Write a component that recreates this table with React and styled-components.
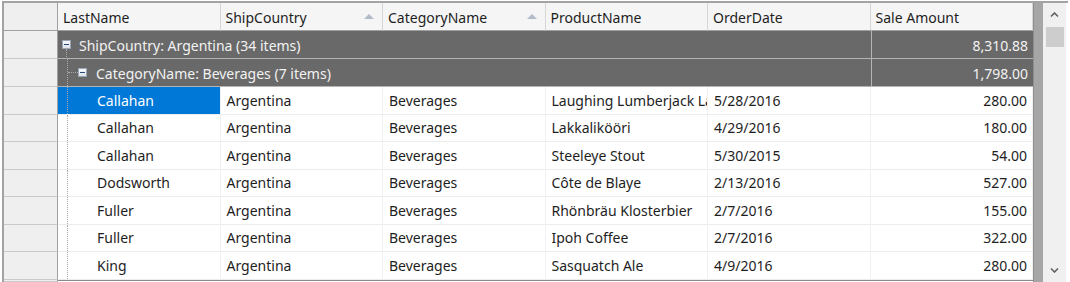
import React from "react";
import styled, { createGlobalStyle } from "styled-components";

const Global = createGlobalStyle`
  body {
    margin: 0;
    background: #ffffff;
    font-family: "Noto Sans", "Open Sans", Arial, sans-serif;
    font-size: 14px;
    color: #1e1e1e;
  }
`;

const COLS = "54px repeat(6, 1fr)";

const Frame = styled.div`
  display: flex;
  width: 1064px;
  height: 279px;
  margin: 1px 0 0 2px;
  border-top: 2px solid #a3a3a3;
  border-left: 2px solid #a3a3a3;
  overflow: hidden;
`;

const Table = styled.div`
  display: flex;
  flex-direction: column;
  width: 1029px;
  flex: none;
`;

const Row = styled.div`
  display: grid;
  grid-template-columns: ${COLS};
  height: ${(p) => p.$h || "27.5px"};
  flex: none;
`;

const Foot = styled.div`
  display: grid;
  grid-template-columns: 54px 1fr;
  flex: 1;
`;

const Corner = styled.div`
  background: #efefef;
  border-right: 1px solid #a0a0a0;
  border-bottom: 1px solid #a0a0a0;
`;

const HeaderCell = styled.div`
  display: flex;
  align-items: center;
  justify-content: space-between;
  padding: 2px 6px 0 5px;
  background: #f5f5f5;
  border-right: 1px solid #d6d6d6;
  border-bottom: 1px solid #a0a0a0;
  white-space: nowrap;
  overflow: hidden;
`;

const SortArrow = styled.span`
  width: 0;
  height: 0;
  margin: 0 2px 2px 0;
  border-left: 5px solid transparent;
  border-right: 5px solid transparent;
  border-bottom: 5px solid #b2bcc8;
`;

const RowHead = styled.div`
  background: #efefef;
  border-right: 1px solid #a0a0a0;
  border-bottom: 1px solid #c9c9c9;
`;

const FootEdge = styled.div`
  background: #ffffff;
  border-top: 1px solid #8a8a8a;
`;

const GroupCaption = styled.div`
  grid-column: span 5;
  display: flex;
  align-items: stretch;
  background: #696969;
  color: #f2f2f2;
  border-bottom: 1px solid #b4b4b4;
  white-space: nowrap;
`;

const GroupSum = styled.div`
  display: flex;
  align-items: center;
  justify-content: flex-end;
  padding: 1px 5px 0 0;
  background: #696969;
  color: #f2f2f2;
  border-left: 1px solid #b4b4b4;
  border-bottom: 1px solid #b4b4b4;
`;

const Guide = styled.span`
  flex: none;
  width: 9px;
  border-right: 1px dotted #a8a8a8;
`;

const Stub = styled.span`
  flex: none;
  align-self: center;
  width: 10px;
  border-top: 1px dotted #a8a8a8;
`;

const Expander = styled.span`
  position: relative;
  flex: none;
  align-self: center;
  width: 9px;
  height: 9px;
  margin-left: ${(p) => p.$ml || "0px"};
  box-sizing: border-box;
  border: 1px solid #9aa6b6;
  background: linear-gradient(#f6f8fb, #dde3eb);

  &::before {
    content: "";
    position: absolute;
    left: 1px;
    top: 3px;
    width: 5px;
    height: 1px;
    border-top: 1px solid #2c4a78;
  }

  ${(p) =>
    p.$tail &&
    `&::after {
      content: "";
      position: absolute;
      left: 3px;
      top: 8px;
      height: 10px;
      border-left: 1px dotted #a8a8a8;
    }`}
`;

const Label = styled.span`
  align-self: center;
  padding-top: ${(p) => (p.$group ? "1px" : "0")};
  margin-left: ${(p) => p.$ml || "8px"};
`;

const Cell = styled.div`
  display: flex;
  align-items: center;
  justify-content: ${(p) => (p.$right ? "flex-end" : "flex-start")};
  padding: ${(p) => (p.$right ? "0 5px 0 0" : "0 0 0 6px")};
  background: ${(p) => (p.$selected ? "#0078d7" : "#ffffff")};
  color: ${(p) => (p.$selected ? "#ffffff" : "#1e1e1e")};
  border-right: 1px solid #f0f0f0;
  border-bottom: 1px solid #ececec;
  white-space: nowrap;
  overflow: hidden;
  text-overflow: clip;
`;

const TreeCell = styled(Cell)`
  padding: 0;
  align-items: stretch;
`;

const Splitter = styled.div`
  flex: none;
  width: 10px;
  background: #a6a6a6;
  border-left: 1px solid #8e8e8e;
  box-sizing: border-box;
`;

const ScrollBar = styled.div`
  flex: none;
  display: flex;
  flex-direction: column;
  align-items: center;
  width: 23px;
  background: #f0f0f0;
`;

const ScrollBtn = styled.div`
  display: flex;
  align-items: center;
  justify-content: center;
  width: 100%;
  height: 24px;
  flex: none;
`;

const Track = styled.div`
  flex: 1;
  width: 100%;
  display: flex;
  flex-direction: column;
  align-items: center;
`;

const Thumb = styled.div`
  width: 18px;
  height: 20px;
  background: #cdcdcd;
`;

const columns = [
  { name: "LastName" },
  { name: "ShipCountry", sorted: true },
  { name: "CategoryName", sorted: true },
  { name: "ProductName" },
  { name: "OrderDate" },
  { name: "Sale Amount" },
];

const rows = [
  ["Callahan", "Argentina", "Beverages", "Laughing Lumberjack Lager", "5/28/2016", "280.00"],
  ["Callahan", "Argentina", "Beverages", "Lakkalikööri", "4/29/2016", "180.00"],
  ["Callahan", "Argentina", "Beverages", "Steeleye Stout", "5/30/2015", "54.00"],
  ["Dodsworth", "Argentina", "Beverages", "Côte de Blaye", "2/13/2016", "527.00"],
  ["Fuller", "Argentina", "Beverages", "Rhönbräu Klosterbier", "2/7/2016", "155.00"],
  ["Fuller", "Argentina", "Beverages", "Ipoh Coffee", "2/7/2016", "322.00"],
  ["King", "Argentina", "Beverages", "Sasquatch Ale", "4/9/2016", "280.00"],
];

const Chevron = ({ down }) => (
  <svg width="9" height="6" viewBox="0 0 9 6">
    <path
      d={down ? "M1 1.5 L4.5 5 L8 1.5" : "M1 4.5 L4.5 1 L8 4.5"}
      fill="none"
      stroke="#606060"
      strokeWidth="1.6"
    />
  </svg>
);

export default function App() {
  return (
    <>
      <Global />
      <Frame>
        <Table>
          <Row $h="28px">
            <Corner />
            {columns.map((c) => (
              <HeaderCell key={c.name}>
                <span>{c.name}</span>
                {c.sorted && <SortArrow />}
              </HeaderCell>
            ))}
          </Row>

          <Row $h="28px">
            <RowHead />
            <GroupCaption>
              <Expander $ml="4px" $tail />
              <Label $group>ShipCountry: Argentina (34 items)</Label>
            </GroupCaption>
            <GroupSum>8,310.88</GroupSum>
          </Row>

          <Row $h="28px">
            <RowHead />
            <GroupCaption>
              <Guide />
              <Stub />
              <Expander />
              <Label $group $ml="9px">
                CategoryName: Beverages (7 items)
              </Label>
            </GroupCaption>
            <GroupSum>1,798.00</GroupSum>
          </Row>

          {rows.map((r, i) => (
            <Row key={i}>
              <RowHead />
              <TreeCell $selected={i === 0}>
                <Guide />
                <Label $ml="29px">{r[0]}</Label>
              </TreeCell>
              <Cell>{r[1]}</Cell>
              <Cell>{r[2]}</Cell>
              <Cell>{r[3]}</Cell>
              <Cell>{r[4]}</Cell>
              <Cell $right>{r[5]}</Cell>
            </Row>
          ))}
          <Foot>
            <RowHead />
            <FootEdge />
          </Foot>
        </Table>
        <Splitter />
        <ScrollBar>
          <ScrollBtn>
            <Chevron />
          </ScrollBtn>
          <Track>
            <Thumb />
          </Track>
          <ScrollBtn>
            <Chevron down />
          </ScrollBtn>
        </ScrollBar>
      </Frame>
    </>
  );
}
